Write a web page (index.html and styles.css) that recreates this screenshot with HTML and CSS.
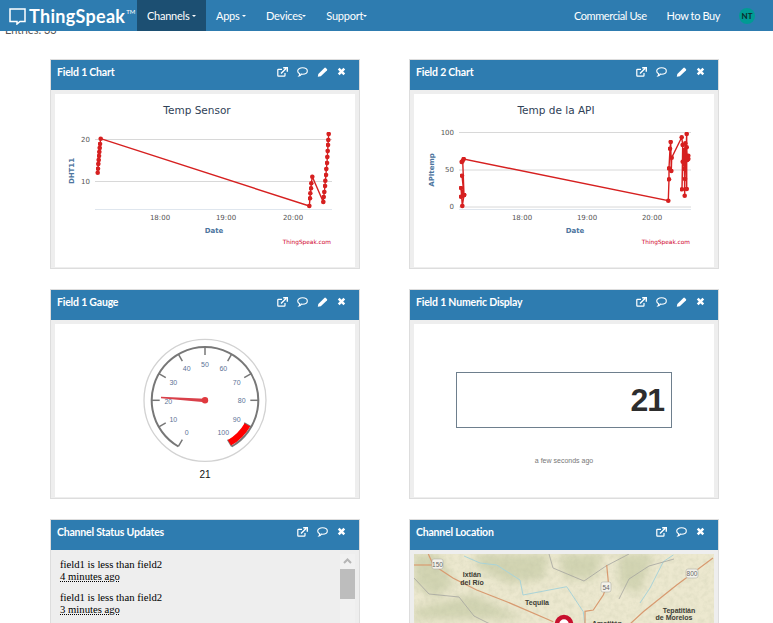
FILE: index.html
```html
<!DOCTYPE html>
<html lang="en">
<head>
    <meta charset="UTF-8">
    <meta name="viewport" content="width=device-width, initial-scale=1.0">
    <title>ThingSpeak Channel</title>
    <link rel="stylesheet" href="styles.css">
</head>
<body>
    <!-- shared icons -->
    <svg class="defs" width="0" height="0">
        <symbol id="i-open" viewBox="0 0 11 10">
            <path d="M8 6v2.6a.6.6 0 0 1-.6.6H1.4a.6.6 0 0 1-.6-.6V2.9a.6.6 0 0 1 .6-.6H5" fill="none" stroke="#fff" stroke-width="1.2"/>
            <path d="M4 6.4 9 1.4M6.2.7h4.1v4.1" fill="none" stroke="#fff" stroke-width="1.4"/>
        </symbol>
        <symbol id="i-comment" viewBox="0 0 11 10">
            <path d="M5.5.8c2.7 0 4.8 1.4 4.8 3.2S8.200 7.200 5.500 7.200c-.4 0-.8 0-1.100-.1C3.800 8 2.900 8.800 1.900 9c.5-.6.800-1.300.8-2.300C1.500 6.200.7 5.200.7 4 .7 2.200 2.800.8 5.500.8z" fill="none" stroke="#fff" stroke-width="1.100"/>
        </symbol>
        <symbol id="i-pencil" viewBox="0 0 11 10">
            <path d="M.8 9.700l.5-2.700L7.400.9a1 1 0 0 1 1.400 0l1.100 1.100a1 1 0 0 1 0 1.400L3.800 9.300z" fill="#fff"/>
        </symbol>
        <symbol id="i-close" viewBox="0 0 9 9">
            <path d="M1.700 1.700l5.600 5.600M7.300 1.700L1.700 7.300" fill="none" stroke="#fff" stroke-width="2.500"/>
        </symbol>
        <marker id="dot" viewBox="0 0 5 5" refX="2.500" refY="2.500" markerWidth="5" markerHeight="5" markerUnits="userSpaceOnUse">
            <circle cx="2.500" cy="2.500" r="2.300" fill="#d62020"/>
        </marker>
    </svg>

    <nav class="navbar">
        <a class="brand" href="#">
            <svg class="brand-icon" width="17" height="17" viewBox="0 0 17 17">
                <path d="M1 1h15v12.500h-5L8 16v-2.500H1z" fill="none" stroke="#fff" stroke-width="1.500"/>
            </svg>
            <span class="brand-name">ThingSpeak</span><span class="brand-tm">TM</span>
        </a>
        <ul class="nav-list">
            <li class="nav-item active">Channels <span class="caret"></span></li>
            <li class="nav-item">Apps <span class="caret"></span></li>
            <li class="nav-item">Devices<span class="caret"></span></li>
            <li class="nav-item">Support<span class="caret"></span></li>
        </ul>
        <ul class="nav-list nav-right">
            <li class="nav-item">Commercial Use</li>
            <li class="nav-item">How to Buy</li>
            <li class="avatar">NT</li>
        </ul>
    </nav>

    <p class="entries">Entries: 33</p>

    <main class="grid">
        <!-- Field 1 Chart -->
        <section class="panel">
            <header class="panel-head">
                <h2>Field 1 Chart</h2>
                <div class="tools">
                    <svg><use href="#i-open"/></svg>
                    <svg><use href="#i-comment"/></svg>
                    <svg><use href="#i-pencil"/></svg>
                    <svg class="x"><use href="#i-close"/></svg>
                </div>
            </header>
            <div class="panel-body">
                <svg class="plot" viewBox="0 0 300 173">
                    <text class="c-title" x="142" y="20" text-anchor="middle">Temp Sensor</text>
                    <line class="c-grid" x1="40" y1="45.500" x2="277" y2="45.500"/>
                    <line class="c-grid" x1="40" y1="87.500" x2="277" y2="87.500"/>
                    <line class="c-axis" x1="40" y1="115.500" x2="277" y2="115.500"/>
                    <text class="c-label" x="35" y="47.500" text-anchor="end">20</text>
                    <text class="c-label" x="35" y="89.500" text-anchor="end">10</text>
                    <text class="c-label" x="105" y="125.500" text-anchor="middle">18:00</text>
                    <text class="c-label" x="171" y="125.500" text-anchor="middle">19:00</text>
                    <text class="c-label" x="238" y="125.500" text-anchor="middle">20:00</text>
                    <text class="c-axis-title" x="159" y="139" text-anchor="middle">Date</text>
                    <text class="c-axis-title" transform="translate(19 77) rotate(-90)" text-anchor="middle">DHT11</text>
                    <text class="c-credit" x="276" y="150" text-anchor="end">ThingSpeak.com</text>
                    <polyline class="c-line" points="42.700,78.700 43,74.700 43.300,70 43.700,66 44,62 44.300,58 44.700,54 45,50 45.700,44.700 254.300,112 255,104.300 255.300,99.300 256,94.300 256.300,89.300 257.300,82.700 268.300,108 268.700,103 269.300,98 270,92 270.300,86.700 271,81 271.300,75 272,69 272.300,63 272.700,57 273,51 273.300,46 273.700,40"/>
                </svg>
            </div>
        </section>

        <!-- Field 2 Chart -->
        <section class="panel">
            <header class="panel-head">
                <h2>Field 2 Chart</h2>
                <div class="tools">
                    <svg><use href="#i-open"/></svg>
                    <svg><use href="#i-comment"/></svg>
                    <svg><use href="#i-pencil"/></svg>
                    <svg class="x"><use href="#i-close"/></svg>
                </div>
            </header>
            <div class="panel-body">
                <svg class="plot" viewBox="0 0 300 173">
                    <text class="c-title" x="142" y="20" text-anchor="middle">Temp de la API</text>
                    <line class="c-grid" x1="45" y1="38.500" x2="277" y2="38.500"/>
                    <line class="c-grid" x1="45" y1="76" x2="277" y2="76"/>
                    <line class="c-grid" x1="45" y1="113" x2="277" y2="113"/>
                    <line class="c-axis" x1="45" y1="115.500" x2="277" y2="115.500"/>
                    <text class="c-label" x="40" y="41" text-anchor="end">100</text>
                    <text class="c-label" x="40" y="78" text-anchor="end">50</text>
                    <text class="c-label" x="40" y="115" text-anchor="end">0</text>
                    <text class="c-label" x="108" y="125.500" text-anchor="middle">18:00</text>
                    <text class="c-label" x="173" y="125.500" text-anchor="middle">19:00</text>
                    <text class="c-label" x="238" y="125.500" text-anchor="middle">20:00</text>
                    <text class="c-axis-title" x="161" y="139" text-anchor="middle">Date</text>
                    <text class="c-axis-title" transform="translate(20 76) rotate(-90)" text-anchor="middle">APItemp</text>
                    <text class="c-credit" x="276" y="150" text-anchor="end">ThingSpeak.com</text>
                    <polyline class="c-line" points="47,102.700 50,101 48.300,112 47,94 50,101 48,81.700 50,101 48.700,66.700 47.700,68 49.700,65 254.300,106.700 255,85.300 255,74.300 256,54.700 256.700,48 257.300,77 257.700,63.700 267.700,43.300 268.700,51 268,95.300 268.700,67.700 270.300,56 270.700,101.700 271.300,49.300 270,70 271,85 272.700,40 272.700,95 272.700,53.300 273.300,66 274.300,61.700 274.300,65 271,60 270.500,75"/>
                </svg>
            </div>
        </section>

        <!-- Field 1 Gauge -->
        <section class="panel">
            <header class="panel-head">
                <h2>Field 1 Gauge</h2>
                <div class="tools">
                    <svg><use href="#i-open"/></svg>
                    <svg><use href="#i-comment"/></svg>
                    <svg><use href="#i-pencil"/></svg>
                    <svg class="x"><use href="#i-close"/></svg>
                </div>
            </header>
            <div class="panel-body">
                <svg class="plot" viewBox="0 0 300 173">
                    <circle cx="150" cy="76.300" r="61" fill="#fff" stroke="#d2d2d2" stroke-width="1.300"/>
                    <path d="M123.350 122.500A53.300 53.300 0 1 1 176.650 122.500" fill="none" stroke="#777" stroke-width="2"/>
                    <g class="g-ticks">
                        <line x1="150" y1="23" x2="150" y2="31" transform="rotate(-150 150 76.300)"/>
                        <line x1="150" y1="23" x2="150" y2="31" transform="rotate(-120 150 76.300)"/>
                        <line x1="150" y1="23" x2="150" y2="31" transform="rotate(-90 150 76.300)"/>
                        <line x1="150" y1="23" x2="150" y2="31" transform="rotate(-60 150 76.300)"/>
                        <line x1="150" y1="23" x2="150" y2="31" transform="rotate(-30 150 76.300)"/>
                        <line x1="150" y1="23" x2="150" y2="31"/>
                        <line x1="150" y1="23" x2="150" y2="31" transform="rotate(30 150 76.300)"/>
                        <line x1="150" y1="23" x2="150" y2="31" transform="rotate(60 150 76.300)"/>
                        <line x1="150" y1="23" x2="150" y2="31" transform="rotate(90 150 76.300)"/>
                        <line x1="150" y1="23" x2="150" y2="31" transform="rotate(120 150 76.300)"/>
                        <line x1="150" y1="23" x2="150" y2="31" transform="rotate(150 150 76.300)"/>
                    </g>
                    <path d="M192.400 100.800A49 49 0 0 1 174.500 118.700" fill="none" stroke="#f00" stroke-width="6.500"/>
                    <g class="g-labels" text-anchor="middle">
                        <text x="131.700" y="111">0</text>
                        <text x="118.300" y="97.800">10</text>
                        <text x="113.300" y="79.500">20</text>
                        <text x="118.300" y="60.800">30</text>
                        <text x="131.700" y="46.800">40</text>
                        <text x="150" y="42.800">50</text>
                        <text x="168.300" y="46.800">60</text>
                        <text x="181.700" y="60.800">70</text>
                        <text x="186.700" y="78.800">80</text>
                        <text x="181.700" y="97.800">90</text>
                        <text x="168.300" y="110.800">100</text>
                    </g>
                    <polygon points="106,72.800 106,74.200 150,78.300 150,74.800" fill="#d9404a"/>
                    <circle cx="150" cy="76.300" r="3.200" fill="#e0393e"/>
                    <text class="g-value" x="150" y="153.500" text-anchor="middle">21</text>
                </svg>
            </div>
        </section>

        <!-- Field 1 Numeric Display -->
        <section class="panel">
            <header class="panel-head">
                <h2>Field 1 Numeric Display</h2>
                <div class="tools">
                    <svg><use href="#i-open"/></svg>
                    <svg><use href="#i-comment"/></svg>
                    <svg><use href="#i-pencil"/></svg>
                    <svg class="x"><use href="#i-close"/></svg>
                </div>
            </header>
            <div class="panel-body">
                <div class="numeric">
                    <div class="numeric-box">21</div>
                    <div class="numeric-time">a few seconds ago</div>
                </div>
            </div>
        </section>

        <!-- Channel Status Updates -->
        <section class="panel">
            <header class="panel-head">
                <h2>Channel Status Updates</h2>
                <div class="tools">
                    <svg><use href="#i-open"/></svg>
                    <svg><use href="#i-comment"/></svg>
                    <svg class="x"><use href="#i-close"/></svg>
                </div>
            </header>
            <div class="panel-body status">
                <div class="status-list">
                    <p>field1 is less than field2<br><abbr>4 minutes ago</abbr></p>
                    <p>field1 is less than field2<br><abbr>3 minutes ago</abbr></p>
                </div>
                <div class="scrollbar">
                    <svg class="scroll-up" width="15" height="15" viewBox="0 0 15 15">
                        <path d="M4 9l3.500-3.500L11 9" fill="none" stroke="#b5b5b5" stroke-width="2"/>
                    </svg>
                    <div class="scroll-thumb"></div>
                </div>
            </div>
        </section>

        <!-- Channel Location -->
        <section class="panel">
            <header class="panel-head">
                <h2>Channel Location</h2>
                <div class="tools">
                    <svg><use href="#i-open"/></svg>
                    <svg><use href="#i-comment"/></svg>
                    <svg class="x"><use href="#i-close"/></svg>
                </div>
            </header>
            <div class="panel-body">
                <svg class="plot" viewBox="0 0 300 173">
                    <defs>
                        <filter id="terrain" x="0" y="0" width="100%" height="100%">
                            <feTurbulence type="fractalNoise" baseFrequency="0.2" numOctaves="3" seed="4"/>
                            <feColorMatrix values="0 0 0 0 0.5  0 0 0 0 0.52  0 0 0 0 0.36  1.200 0 0 0 -0.45"/>
                        </filter>
                        <filter id="soft"><feGaussianBlur stdDeviation="4"/></filter>
                    </defs>
                    <rect width="300" height="173" fill="#ece8cf"/>
                    <g filter="url(#soft)" fill="#d2d4b2">
                        <path d="M0 0H25L40 30 20 45 0 30z"/>
                        <path d="M60 0H135L130 25 95 30 65 15z"/>
                        <path d="M145 0H190L180 25 150 25z"/>
                        <path d="M205 0H240L225 40 205 30z"/>
                        <path d="M0 55L60 40 110 65H0z"/>
                    </g>
                    <rect width="300" height="173" filter="url(#terrain)" opacity=".4"/>
                    <g class="m-water">
                        <path d="M82.700 11L106 26 109 41 152.700 32.700 169.300 57.700 171 72"/>
                        <path d="M226 49L236 34 249.300 7.700 259.300 1"/>
                        <path d="M50 2L66 9 82.700 11"/>
                    </g>
                    <g class="m-line">
                        <path d="M135 0L139 14 170 27 192 12 215 0"/>
                        <path d="M0 24L15 40 45 43 60 62 80 72"/>
                        <path d="M205 45L215 25 235 12 260 5"/>
                    </g>
                    <g class="m-road">
                        <path d="M14.300 0L19.300 11 39.300 24.300 62.700 36 92.700 47.700 139.300 67.700"/>
                        <path d="M192.700 11L194.300 27.700 189.300 41 179.300 56 171 57.300 171 70"/>
                        <path d="M299 4L262.700 31 229.300 57.700 216 70"/>
                        <path d="M0 11H19.300"/>
                    </g>
                    <g class="m-shield">
                        <rect x="18" y="5" width="11" height="10" rx="2"/>
                        <rect x="187" y="28" width="10" height="10" rx="2"/>
                        <rect x="272" y="15" width="12" height="9" rx="2"/>
                    </g>
                    <g class="m-num" text-anchor="middle">
                        <text x="23.500" y="13">150</text>
                        <text x="192" y="35.500">54</text>
                        <text x="278" y="22">800</text>
                    </g>
                    <g class="m-place" text-anchor="middle">
                        <text x="58" y="23">Ixtlán</text>
                        <text x="58" y="30.500">del Río</text>
                        <text x="123" y="50.500">Tequila</text>
                        <text x="265" y="58.500">Tepatitlán</text>
                        <text x="260" y="66">de Morelos</text>
                        <text x="193" y="71.500">Amatitán</text>
                    </g>
                    <circle cx="150" cy="70" r="7" fill="#fff" stroke="#c8102e" stroke-width="4.500"/>
                </svg>
            </div>
        </section>
    </main>
</body>
</html>
```

FILE: styles.css
```css
*{
    margin: 0;
    padding: 0;
    box-sizing: border-box;
}

html, body{
    height: 623px;
    overflow: hidden;
}

body{
    background-color: #fff;
    font-family: "Lato", "Open Sans", sans-serif;
}

.defs{
    position: absolute;
}

/* top bar */
.navbar{
    position: fixed;
    top: 0;
    left: 0;
    right: 0;
    height: 31px;
    display: flex;
    align-items: stretch;
    background-color: #2e7cb0;
    color: #fff;
    z-index: 10;
}

.brand{
    display: flex;
    align-items: center;
    width: 137px;
    flex: none;
    padding-left: 9px;
    color: #fff;
    text-decoration: none;
}

.brand-icon{
    flex: none;
    margin-top: 1px;
}

.brand-name{
    margin-left: 3px;
    font-size: 18px;
    font-weight: 700;
    letter-spacing: .3px;
}

.brand-tm{
    font-size: 6px;
    margin: -9px 0 0 1px;
}

.nav-list{
    list-style: none;
    display: flex;
}

.nav-right{
    margin-left: auto;
    padding-right: 18px;
}

.nav-item{
    display: flex;
    align-items: center;
    padding: 0 10px;
    font-size: 11px;
    letter-spacing: -.25px;
    white-space: pre;
}

.nav-right .nav-item{
    letter-spacing: -.4px;
}

.nav-item.active{
    background-color: #1c4f72;
}

.caret{
    display: inline-block;
    border-top: 2px solid #fff;
    border-left: 2px solid transparent;
    border-right: 2px solid transparent;
}

.avatar{
    align-self: center;
    width: 16px;
    height: 16px;
    margin-left: 9px;
    border-radius: 50%;
    background-color: #009b94;
    color: #0d2b2b;
    font-size: 8px;
    font-weight: 700;
    line-height: 16px;
    text-align: center;
}

.entries{
    padding: 22px 0 0 5px;
    height: 59px;
    font-size: 11px;
    line-height: 16px;
    color: #555;
}

/* panels */
.grid{
    display: grid;
    grid-template-columns: 310px 310px;
    grid-auto-rows: 210px;
    column-gap: 49px;
    row-gap: 20px;
    padding-left: 50px;
}

.panel{
    display: flex;
    flex-direction: column;
    border: 1px solid #ddd;
    background-color: #eee;
}

.panel-head{
    display: flex;
    align-items: center;
    justify-content: space-between;
    height: 30px;
    flex: none;
    padding: 0 13px 6px 6px;
    background-color: #2e7cb0;
    color: #fff;
}

.panel-head h2{
    font-size: 10.500px;
    font-weight: 700;
    letter-spacing: -.2px;
}

.tools{
    display: flex;
    align-items: center;
    gap: 9px;
    margin-top: -1px;
}

.tools svg{
    width: 11px;
    height: 10px;
}

.tools svg.x{
    width: 9px;
    height: 9px;
}

.panel-body{
    flex: 1;
    padding: 4px 4px 1px;
    min-height: 0;
}

.plot{
    display: block;
    width: 300px;
    height: 173px;
    background-color: #fff;
}

/* charts */
.c-title{
    font: 10.500px "DejaVu Sans", sans-serif;
    fill: #2f4257;
}

.c-grid{
    stroke: #d8d8d8;
    stroke-width: 1;
}

.c-axis{
    stroke: #dfe6ee;
    stroke-width: 1;
}

.c-label{
    font: 7px "DejaVu Sans", sans-serif;
    fill: #555;
}

.c-axis-title{
    font: 700 7px "DejaVu Sans", sans-serif;
    fill: #4d759e;
}

.c-credit{
    font: 5.800px "DejaVu Sans", sans-serif;
    fill: #d0002a;
}

.c-line{
    fill: none;
    stroke: #d62020;
    stroke-width: 1.400;
    marker-start: url(#dot);
    marker-mid: url(#dot);
    marker-end: url(#dot);
}

/* gauge */
.g-ticks line{
    stroke: #777;
    stroke-width: 1.500;
}

.g-labels{
    font: 7px "Liberation Sans", sans-serif;
    fill: #5b7396;
}

.g-value{
    font: 10px "Liberation Sans", sans-serif;
    fill: #111;
}

/* numeric display */
.numeric{
    height: 173px;
    background-color: #fff;
    padding: 48px 42px 0;
}

.numeric-box{
    height: 56px;
    padding-right: 7px;
    border: 1px solid #6e7f8d;
    font: 700 32px/54px "Liberation Sans", sans-serif;
    letter-spacing: -1px;
    color: #2d2d2d;
    text-align: right;
}

.numeric-time{
    margin-top: 29px;
    font: 7px "Liberation Sans", sans-serif;
    color: #777;
    text-align: center;
}

/* status list */
.status{
    display: flex;
    padding: 4px 4px 0 0;
}

.status-list{
    flex: 1;
    padding: 4px 0 0 9px;
    font: 10.700px/12px "Liberation Serif", serif;
    color: #000;
}

.status-list p{
    margin-bottom: 9px;
}

.status-list abbr{
    text-decoration: underline dotted;
}

.scrollbar{
    width: 15px;
    height: 173px;
    background-color: #f1f1f1;
}

.scroll-up{
    display: block;
}

.scroll-thumb{
    height: 30px;
    background-color: #bdbdbd;
}

/* map */
.m-water path{
    fill: none;
    stroke: #a9d3d8;
    stroke-width: 1;
}

.m-line path{
    fill: none;
    stroke: #a4a4a0;
    stroke-width: .8;
}

.m-road path{
    fill: none;
    stroke: #d89a70;
    stroke-width: 1.200;
}

.m-shield rect{
    fill: #f4f2ea;
    stroke: #b0b0a8;
    stroke-width: .6;
}

.m-num{
    font: 6.500px "Liberation Sans", sans-serif;
    fill: #666;
}

.m-place{
    font: 700 7px "Liberation Sans", sans-serif;
    fill: #3c3c34;
}
```
